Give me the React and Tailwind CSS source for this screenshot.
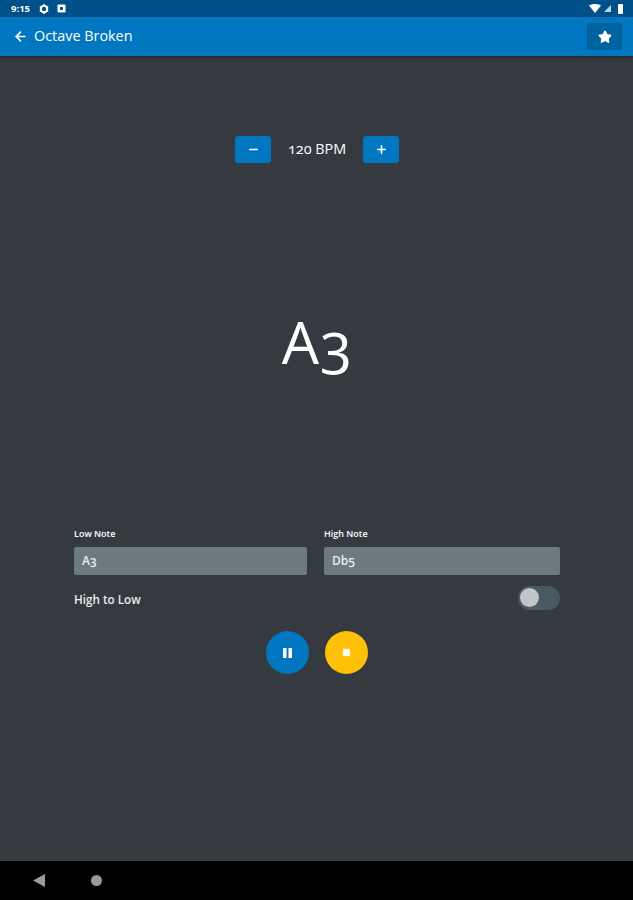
import { ArrowLeft, Minus, Plus, Star, Square } from "lucide-react";

function StatusBar() {
  return (
    <div className="flex h-[17px] items-center justify-between bg-[#00508a] pl-[11px] pr-[10px] text-white">
      <div className="flex items-center gap-[8px]">
        <span className="text-[9.5px] font-bold leading-none">9:15</span>
        <svg width="10" height="10" viewBox="0 0 10 10" className="ml-[1px]">
          <circle cx="5" cy="5" r="3.2" fill="none" stroke="white" strokeWidth="2" />
          <path d="M5 0v2M5 8v2M0.7 2.500l1.700 1M7.600 6.500l1.700 1M0.700 7.500l1.700-1M7.600 3.500l1.700-1" stroke="white" strokeWidth="1.4" />
        </svg>
        <svg width="9" height="9" viewBox="0 0 9 9">
          <rect width="8" height="8" y="0.5" x="0.5" rx="1" fill="white" />
          <rect x="3" y="3" width="3" height="3" fill="#00508a" />
        </svg>
      </div>
      <div className="flex items-center gap-[3px]">
        <svg width="12" height="9" viewBox="0 0 12 9">
          <path d="M0 1.500C3.500-.5 8.500-.5 12 1.500L6 9z" fill="white" />
        </svg>
        <svg width="7" height="7" viewBox="0 0 7 7">
          <path d="M7 0v7H0z" fill="white" opacity="0.75" />
        </svg>
        <div className="ml-[4px] h-[10px] w-[5px] rounded-[1px] bg-white" />
      </div>
    </div>
  );
}

function AppBar() {
  return (
    <div className="flex h-[39px] items-center justify-between bg-[#0077c0] pl-[13px] pr-[11px] shadow-[0_1px_2px_#222]">
      <div className="flex items-center gap-[6px] text-white">
        <ArrowLeft size={15} strokeWidth={2.5} />
        <span className="text-[14.4px] font-medium leading-none">Octave Broken</span>
      </div>
      <button className="flex h-[27px] w-[35px] items-center justify-center rounded-[2px] bg-[#00629f]">
        <Star size={14} fill="white" stroke="white" />
      </button>
    </div>
  );
}

function BpmButton({ children }) {
  return (
    <button className="flex h-[27px] w-[36px] items-center justify-center rounded-[3px] bg-[#0077c0] text-white">
      {children}
    </button>
  );
}

function NoteField({ label, value, className }) {
  return (
    <div className={className}>
      <div className="mb-[7px] text-[9px] font-semibold leading-[12px] text-white">{label}</div>
      <div className="flex h-[28px] items-center rounded-[2px] bg-[#6c7a80] pl-[8px] text-[12px] font-semibold text-[#e9ecef] [font-variant-numeric:oldstyle-nums]">
        {value}
      </div>
    </div>
  );
}

export default function App() {
  return (
    <div className="flex h-[900px] w-[633px] flex-col overflow-hidden bg-[#343a40] font-['Open_Sans',sans-serif]">
      <StatusBar />
      <AppBar />
      <main className="flex flex-1 flex-col px-[74px] pt-[80px]">
        <div className="ml-[1px] flex items-center justify-center gap-[17px]">
          <BpmButton><Minus size={13} strokeWidth={3} /></BpmButton>
          <span className="w-[58px] pb-[1px] text-center text-[14.4px] font-medium whitespace-nowrap text-white [font-variant-numeric:oldstyle-nums]">
            120 BPM
          </span>
          <BpmButton><Plus size={13} strokeWidth={3} /></BpmButton>
        </div>

        <div className="mt-[138px] pl-[2px] text-center text-[59px] font-medium leading-[80px] tracking-[1px] text-white [font-variant-numeric:oldstyle-nums]">
          A3
        </div>

        <div className="mt-[147px] flex w-[486px] items-start gap-[17px]">
          <NoteField label="Low Note" value="A3" className="w-[233px]" />
          <NoteField label="High Note" value="Db5" className="w-[236px]" />
        </div>

        <div className="mt-[10px] flex h-[25px] w-[486px] items-center justify-between">
          <span className="pt-[5px] text-[11.7px] font-semibold text-[#e9ecef]">High to Low</span>
          <div className="flex h-[24px] w-[42px] items-center rounded-full bg-[#495a60] pl-[2px]">
            <div className="h-[19px] w-[19px] rounded-full bg-[#c3c5c9]" />
          </div>
        </div>

        <div className="mt-[21px] flex justify-center gap-[16px]">
          <button className="flex h-[43px] w-[43px] items-center justify-center rounded-full bg-[#0077c0]">
            <svg width="9" height="10" viewBox="0 0 9 10">
              <path d="M0 0h3.500v10H0zM5.500 0H9v10H5.500z" fill="white" />
            </svg>
          </button>
          <button className="flex h-[43px] w-[43px] items-center justify-center rounded-full bg-[#ffc107] text-white">
            <Square size={9} fill="white" stroke="white" strokeWidth={1} />
          </button>
        </div>
      </main>
      <nav className="flex h-[39px] items-center bg-black pl-[33px]">
        <svg width="12" height="13" viewBox="0 0 12 13">
          <path d="M12 0v13L0 6.500z" fill="#9a9a9a" />
        </svg>
        <div className="ml-[46px] h-[11px] w-[11px] rounded-full bg-[#9a9a9a]" />
      </nav>
    </div>
  );
}
